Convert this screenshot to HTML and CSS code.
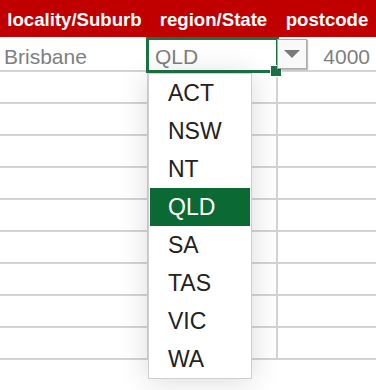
FILE: index.html
```html
<!DOCTYPE html>
<html>
<head>
    <meta charset="UTF-8">
    <title>Address list</title>
    <link rel="stylesheet" href="styles.css">
</head>
<body>
<div class="sheet">
    <div class="head">
        <div class="hcell">locality/Suburb</div>
        <div class="hcell">region/State</div>
        <div class="hcell">postcode</div>
    </div>
    <div class="row first">
        <div class="cell">Brisbane</div>
        <div class="cell state">QLD</div>
        <div class="cell num">4000</div>
    </div>
    <div class="row"><div class="cell"></div><div class="cell"></div><div class="cell"></div></div>
    <div class="row"><div class="cell"></div><div class="cell"></div><div class="cell"></div></div>
    <div class="row"><div class="cell"></div><div class="cell"></div><div class="cell"></div></div>
    <div class="row"><div class="cell"></div><div class="cell"></div><div class="cell"></div></div>
    <div class="row"><div class="cell"></div><div class="cell"></div><div class="cell"></div></div>
    <div class="row"><div class="cell"></div><div class="cell"></div><div class="cell"></div></div>
    <div class="row"><div class="cell"></div><div class="cell"></div><div class="cell"></div></div>
    <div class="row"><div class="cell"></div><div class="cell"></div><div class="cell"></div></div>
    <div class="row"><div class="cell"></div><div class="cell"></div><div class="cell"></div></div>

    <!-- selected cell + its in-cell list -->
    <div class="active"></div>
    <div class="handle"></div>
    <div class="dropbtn">
        <svg width="16" height="8" viewBox="0 0 16 8"><polygon points="0,0 16,0 8,8" fill="#7a7a7a"/></svg>
    </div>
    <ul class="list">
        <li>ACT</li>
        <li>NSW</li>
        <li>NT</li>
        <li class="sel">QLD</li>
        <li>SA</li>
        <li>TAS</li>
        <li>VIC</li>
        <li>WA</li>
    </ul>
</div>
</body>
</html>
```

FILE: styles.css
```css
html, body {
    margin: 0;
    background: #fff;
}

.sheet {
    position: relative;
    width: 376px;
    height: 390px;
    overflow: hidden;
    font-family: "Liberation Sans", Arial, sans-serif;
}

.head, .row {
    display: grid;
    grid-template-columns: 149px 129px 1fr;
}

.head {
    background: #c00000;
    height: 37px;
}

.hcell {
    color: #fff;
    font-weight: bold;
    font-size: 18.6px;
    line-height: 35px;
    padding-top: 2px;
    text-align: center;
    white-space: nowrap;
}

.cell {
    height: 30px;
    border-bottom: 2px solid #d4d4d4;
    border-right: 2px solid #d4d4d4;
    color: #7f7f7f;
    font-size: 21px;
    line-height: 24px;
    white-space: nowrap;
}

.cell:last-child {
    border-right: none;
}

.first .cell {
    height: 25px;
    padding-top: 8px;
}

.first .cell:first-child {
    padding-left: 4px;
}

.state {
    padding-left: 6px;
}

.num {
    text-align: right;
    padding-right: 6px;
}

.active {
    position: absolute;
    left: 146px;
    top: 37px;
    width: 133px;
    height: 36px;
    box-sizing: border-box;
    border: 3px solid #1e7145;
}

.handle {
    position: absolute;
    left: 270px;
    top: 65px;
    width: 10px;
    height: 10px;
    background: #1e7145;
    border: 1px solid #fff;
}

.dropbtn {
    position: absolute;
    left: 277px;
    top: 39px;
    width: 28px;
    height: 28px;
    background: #f9f9f9;
    border: 1px solid #ababab;
    box-shadow: 1px 1px 1px rgba(0, 0, 0, 0.25);
    display: flex;
    align-items: center;
    justify-content: center;
}

.list {
    position: absolute;
    left: 148px;
    top: 73px;
    width: 100px;
    margin: 0;
    padding: 0 1px;
    list-style: none;
    background: #fff;
    border: 1px solid #cfcfcf;
    box-shadow: 0 2px 28px rgba(0, 0, 0, 0.15);
}

.list li {
    height: 38px;
    line-height: 38px;
    padding-left: 18px;
    font-size: 23px;
    color: #222;
}

.list li.sel {
    background: #0b6a33;
    color: #fff;
}
```
